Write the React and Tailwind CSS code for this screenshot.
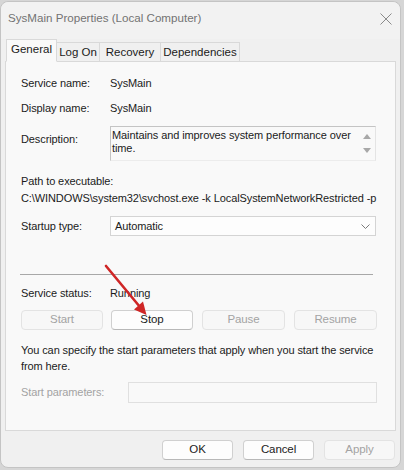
import { useState } from "react";

const FONT = "font-['Liberation_Sans',Arial,sans-serif]";

function Btn({ label, disabled, w = "w-[82px]" }) {
  return (
    <button
      className={
        "h-[20px] rounded-[4px] border text-[11.5px] leading-none " +
        w +
        (disabled
          ? " border-[#e3e3e3] bg-[#f7f7f7] text-[#a3a3a3]"
          : " border-[#d0d0d0] border-b-[#b8b8b8] bg-[#fdfdfd] text-[#1b1b1b]")
      }
    >
      {label}
    </button>
  );
}

function Row({ label, children, className = "" }) {
  return (
    <div className={"flex items-center h-[16px] " + className}>
      <span className="w-[89px] shrink-0">{label}</span>
      {children}
    </div>
  );
}

export default function App() {
  // Tabs of the property sheet, first one is active
  const tabs = ["General", "Log On", "Recovery", "Dependencies"];
  const [active] = useState(0);
  const tabWidths = ["w-[51px]", "w-[43px]", "w-[61px]", "w-[79px]"];

  return (
    <div className={"w-[404px] h-[470px] bg-[#d6d6d6] overflow-hidden " + FONT}>
      <div className="relative w-[401px] h-[467px] mt-px bg-[#f0f0f0] rounded-[8px] border border-[#c4c4c4] flex flex-col text-[11px] tracking-[-0.1px] text-[#1b1b1b]">
        {/* Title bar */}
        <div className="h-[37px] flex items-start justify-between pl-[7px] pr-[7px] pt-[8px] shrink-0 bg-[#f2f2f2] rounded-t-[8px]">
          <span className="text-[11.6px] tracking-normal text-[#737373] leading-[16px]">SysMain Properties (Local Computer)</span>
          <svg width="14" height="14" viewBox="0 0 14 14" className="mt-[2px]">
            <path d="M1.5 1.5 L12.5 12.5 M12.5 1.5 L1.5 12.5" stroke="#8a8a8a" strokeWidth="1" />
          </svg>
        </div>

        {/* Tabs */}
        <div className="flex items-end h-[22px] pl-[5px] shrink-0 relative z-10 text-[11.5px] tracking-normal">
          {tabs.map((t, i) => (
            <div
              key={t}
              className={
                "flex justify-center border border-[#d9d9d9] " +
                tabWidths[i] +
                (i === active
                  ? " h-[23px] -mb-px bg-[#f9f9f9] border-b-[#f9f9f9] pt-[1px]"
                  : " h-[19px] bg-[#f0f0f0] border-l-0 border-b-0 pt-[1px]")
              }
            >
              <span className="leading-[16px]">{t}</span>
            </div>
          ))}
        </div>

        {/* Tab panel */}
        <div className="mx-[4px] h-[370px] bg-[#f9f9f9] border border-[#d9d9d9] pl-[15px] shrink-0">
          <Row label="Service name:" className="mt-[13px]">
            <span>SysMain</span>
          </Row>
          <Row label="Display name:" className="mt-[9px]">
            <span>SysMain</span>
          </Row>

          <div className="flex mt-[10px] h-[35px]">
            <span className="w-[89px] shrink-0 mt-[5px] leading-[16px]">Description:</span>
            <div className="w-[266px] h-[35px] border-t border-l border-[#c4c4c4] border-r border-r-[#e4e4e4] border-b border-b-[#ececec] bg-[#f9f9f9] flex">
              <p className="flex-1 leading-[13px] pt-[2px] pl-[1px]">
                Maintains and improves system performance over time.
              </p>
              <div className="w-[16px] flex flex-col items-center justify-between py-[7px]">
                <svg width="8" height="5" viewBox="0 0 8 5">
                  <path d="M0 5 L4 0 L8 5 Z" fill="#a8a8a8" />
                </svg>
                <svg width="8" height="5" viewBox="0 0 8 5">
                  <path d="M0 0 L8 0 L4 5 Z" fill="#a8a8a8" />
                </svg>
              </div>
            </div>
          </div>

          <div className="mt-[12px] leading-[16px]">Path to executable:</div>
          <div className="mt-px leading-[16px] whitespace-nowrap">
            C:\WINDOWS\system32\svchost.exe -k LocalSystemNetworkRestricted -p
          </div>

          <div className="flex items-center mt-[10px] h-[20px]">
            <span className="w-[89px] shrink-0">Startup type:</span>
            <div className="w-[266px] h-[20px] border border-[#d4d4d4] bg-[#fdfdfd] flex items-center justify-between pl-[4px] pr-[5px]">
              <span>Automatic</span>
              <svg width="9" height="5" viewBox="0 0 9 5">
                <path d="M0.5 0.5 L4.5 4.5 L8.5 0.5" stroke="#7a7a7a" fill="none" strokeWidth="1" />
              </svg>
            </div>
          </div>

          <div className="mt-[38px] w-[353px] h-px bg-[#a8a8a8] -ml-px"></div>

          <Row label="Service status:" className="mt-[10px]">
            <span>Running</span>
          </Row>

          <div className="flex mt-[9px] gap-[8px]">
            <Btn label="Start" disabled />
            <Btn label="Stop" />
            <Btn label="Pause" disabled w="w-[83px] ml-px" />
            <Btn label="Resume" disabled w="w-[83px] ml-[1px]" />
          </div>

          <p className="mt-[12px] leading-[16px] w-[360px]">
            You can specify the start parameters that apply when you start the service from here.
          </p>

          <div className="flex items-center mt-[8px] h-[21px]">
            <span className="w-[107px] shrink-0 text-[#a3a3a3]">Start parameters:</span>
            <div className="w-[249px] h-[21px] border border-[#e0e0e0] bg-[#f9f9f9]"></div>
          </div>
        </div>

        {/* Dialog buttons */}
        <div className="flex justify-end gap-[10px] pr-[5px] mt-[9px]">
          <Btn label="OK" w="w-[71px]" />
          <Btn label="Cancel" w="w-[71px]" />
          <Btn label="Apply" disabled w="w-[71px]" />
        </div>

        {/* Red annotation arrow */}
        <svg className="absolute left-0 top-0 pointer-events-none" width="401" height="467" viewBox="0 -1 401 467">
          <line x1="105" y1="263" x2="139" y2="304" stroke="#cf2626" strokeWidth="2.6" strokeLinecap="round" />
          <path d="M133 306.5 L142 298.5 L145.5 312 Z" fill="#cf2626" />
        </svg>
      </div>
    </div>
  );
}
